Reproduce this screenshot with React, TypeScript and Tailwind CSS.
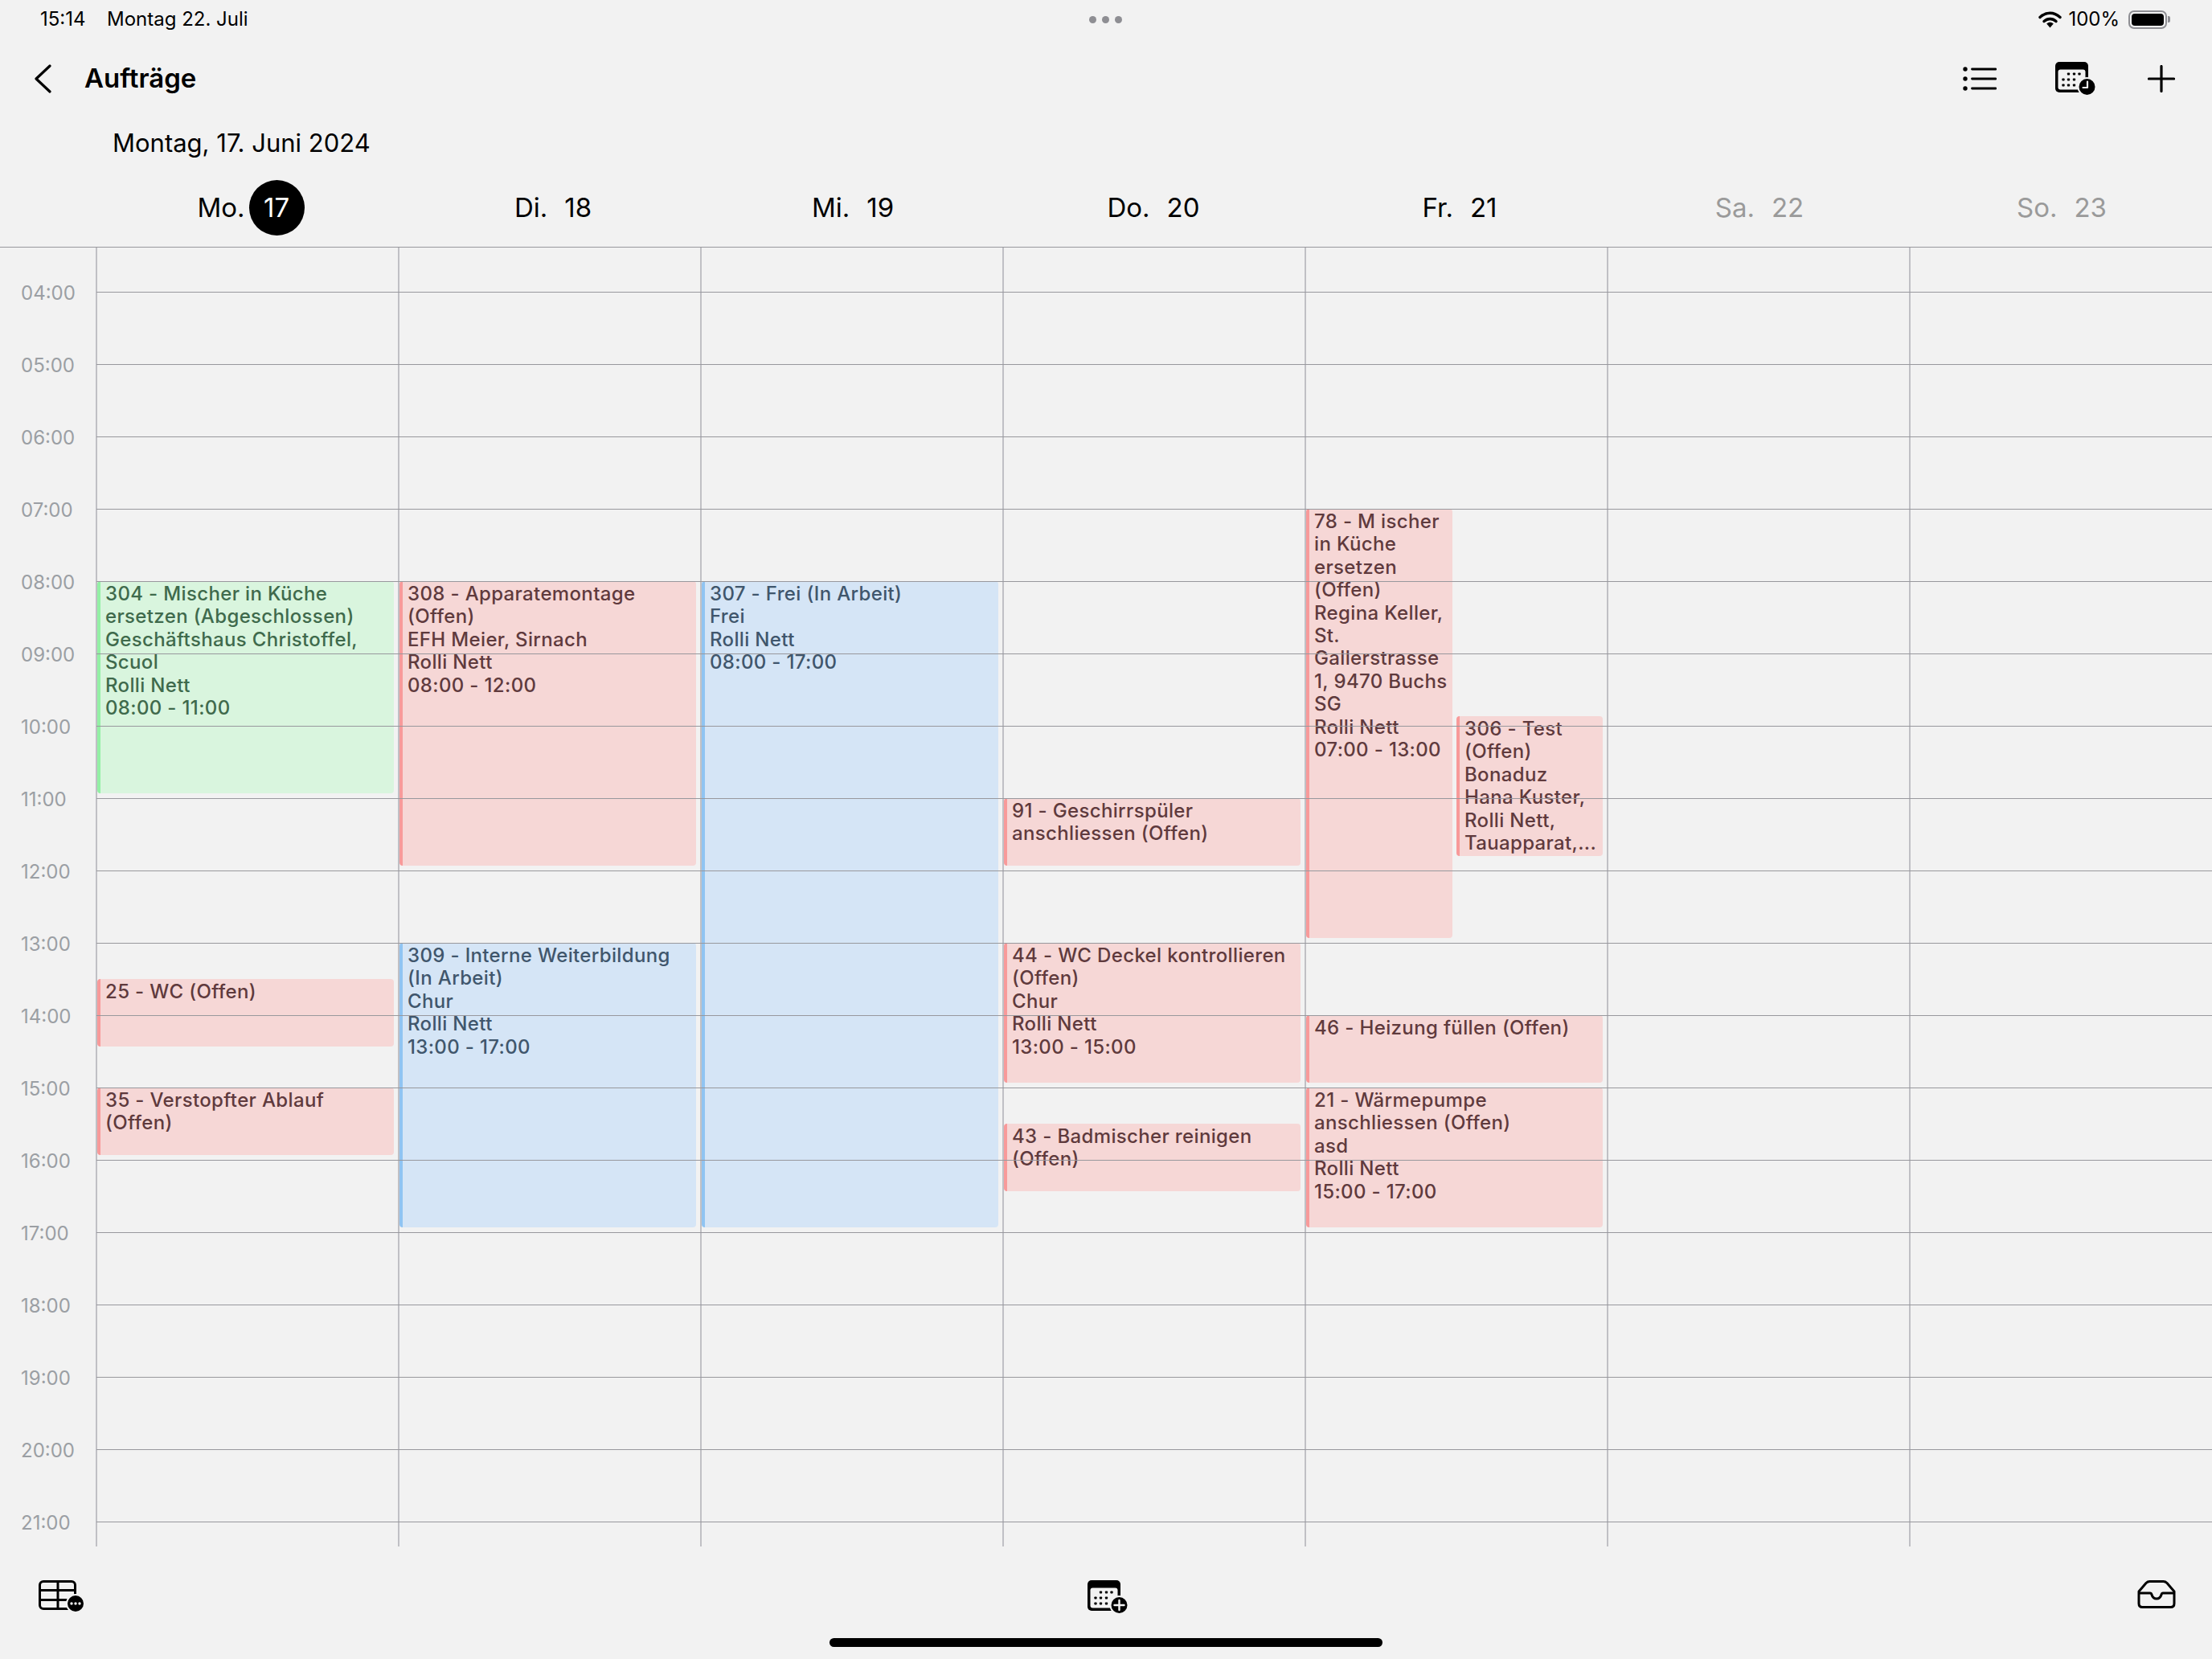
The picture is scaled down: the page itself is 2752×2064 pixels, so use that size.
type Tone = "green" | "red" | "blue";

type CalEvent = {
  tone: Tone;
  start: number;
  end: number;
  lines: string[];
  half?: "left" | "right";
};

const HOUR = 90;
const FIRST_HOUR = 4;
const TOP_PAD = 55;

const toneClass: Record<Tone, string> = {
  green: "bg-[#d9f5de] border-[#93f0a5] text-[#3f6a4c]",
  red: "bg-[#f6d7d6] border-[#f89a9a] text-[#5f3a3d]",
  blue: "bg-[#d5e5f6] border-[#90c4f2] text-[#40566c]",
};

const days = [
  { label: "Mo.", num: "17", today: true, shift: "pl-[8px]" },
  { label: "Di.", num: "18", shift: "pl-[8px]" },
  { label: "Mi.", num: "19", shift: "pl-[2px]" },
  { label: "Do.", num: "20", shift: "pr-[2px]" },
  { label: "Fr.", num: "21", shift: "pl-[8px]" },
  { label: "Sa.", num: "22", muted: true, shift: "pl-[2px]" },
  { label: "So.", num: "23", muted: true, shift: "pl-[2px]" },
];

const events: CalEvent[][] = [
  [
    {
      tone: "green",
      start: 8,
      end: 11,
      lines: ["304 - Mischer in Küche ersetzen (Abgeschlossen)", "Geschäftshaus Christoffel, Scuol", "Rolli Nett", "08:00 - 11:00"],
    },
    { tone: "red", start: 13.5, end: 14.5, lines: ["25 - WC (Offen)"] },
    { tone: "red", start: 15, end: 16, lines: ["35 - Verstopfter Ablauf (Offen)"] },
  ],
  [
    {
      tone: "red",
      start: 8,
      end: 12,
      lines: ["308 - Apparatemontage (Offen)", "EFH Meier, Sirnach", "Rolli Nett", "08:00 - 12:00"],
    },
    {
      tone: "blue",
      start: 13,
      end: 17,
      lines: ["309 - Interne Weiterbildung (In Arbeit)", "Chur", "Rolli Nett", "13:00 - 17:00"],
    },
  ],
  [
    {
      tone: "blue",
      start: 8,
      end: 17,
      lines: ["307 - Frei (In Arbeit)", "Frei", "Rolli Nett", "08:00 - 17:00"],
    },
  ],
  [
    { tone: "red", start: 11, end: 12, lines: ["91 - Geschirrspüler anschliessen (Offen)"] },
    {
      tone: "red",
      start: 13,
      end: 15,
      lines: ["44 - WC Deckel kontrollieren (Offen)", "Chur", "Rolli Nett", "13:00 - 15:00"],
    },
    { tone: "red", start: 15.5, end: 16.5, lines: ["43 - Badmischer reinigen (Offen)"] },
  ],
  [
    {
      tone: "red",
      start: 7,
      end: 13,
      half: "left",
      lines: ["78 - M ischer in Küche ersetzen (Offen)", "Regina Keller, St. Gallerstrasse 1, 9470 Buchs SG", "Rolli Nett", "07:00 - 13:00"],
    },
    {
      tone: "red",
      start: 9.867,
      end: 11.867,
      half: "right",
      lines: ["306 - Test (Offen)", "Bonaduz", "Hana Kuster, Rolli Nett, Tauapparat,..."],
    },
    { tone: "red", start: 14, end: 15, lines: ["46 - Heizung füllen (Offen)"] },
    {
      tone: "red",
      start: 15,
      end: 17,
      lines: ["21 - Wärmepumpe anschliessen (Offen)", "asd", "Rolli Nett", "15:00 - 17:00"],
    },
  ],
  [],
  [],
];

const hours = Array.from({ length: 18 }, (_, i) => `${String(i + FIRST_HOUR).padStart(2, "0")}:00`);

function EventCard({ event }: { event: CalEvent }) {
  const top = (event.start - FIRST_HOUR) * HOUR + TOP_PAD;
  const height = (event.end - event.start) * HOUR - 6;
  const placement =
    event.half === "left"
      ? "left-0 w-[182px]"
      : event.half === "right"
        ? "left-[187px] w-[182px]"
        : "left-0 w-[369px]";

  return (
    <div
      className={`absolute overflow-hidden rounded-[4px] border-l-[4px] pl-[6px] pr-[2px] pt-[2px] text-[24px] font-medium leading-[28.4px] tracking-[0.35px] ${placement} ${toneClass[event.tone]}`}
      style={{ top, height }}
    >
      {event.lines.map((line) => (
        <div key={line}>{line}</div>
      ))}
    </div>
  );
}

function CalendarGlyph({ badge }: { badge: "clock" | "plus" }) {
  const dots = [
    [16.5, 15],
    [23.5, 15],
    [30, 15],
    [10, 22],
    [16.5, 22],
    [23.5, 22],
    [10, 29],
    [16.5, 29],
    [23.5, 29],
  ];
  return (
    <svg width="51" height="42" viewBox="0 0 51 42">
      <rect x="0" y="0" width="41" height="38" rx="5" fill="#000" />
      <rect x="3.5" y="9.5" width="34" height="25" rx="3" fill="#f2f2f2" />
      {dots.map(([cx, cy]) => (
        <rect key={`${cx}-${cy}`} x={cx - 1.6} y={cy - 1.6} width="3.2" height="3.2" rx="0.8" fill="#000" />
      ))}
      <circle cx="39.5" cy="31" r="12" fill="#f2f2f2" />
      <circle cx="39.5" cy="31" r="10" fill="#000" />
      {badge === "clock" ? (
        <path d="M40 24.5V32H34.5" fill="none" stroke="#f2f2f2" strokeWidth="2.2" strokeLinecap="round" strokeLinejoin="round" />
      ) : (
        <path d="M39.5 25V37M33.5 31H45.5" fill="none" stroke="#f2f2f2" strokeWidth="2.4" strokeLinecap="round" />
      )}
    </svg>
  );
}

function StatusBar() {
  return (
    <div className="relative flex h-[48px] items-center pl-[50px] pr-[52px] text-[24px] text-black">
      <span className="w-[83px]">15:14</span>
      <span>Montag 22. Juli</span>
      <span className="absolute left-[1355px] top-[20px] flex gap-[7px]">
        <span className="size-[9px] rounded-full bg-[#8e8e93]" />
        <span className="size-[9px] rounded-full bg-[#8e8e93]" />
        <span className="size-[9px] rounded-full bg-[#8e8e93]" />
      </span>
      <svg width="29" height="21" viewBox="0 0 29 21" className="ml-auto mr-[8px]">
        <path d="M2 7.5C9.5 0.5 19.5 0.5 27 7.5" fill="none" stroke="#000" strokeWidth="3.4" strokeLinecap="round" />
        <path d="M7 12.5C11.5 8.5 17.5 8.5 22 12.5" fill="none" stroke="#000" strokeWidth="3.4" strokeLinecap="round" />
        <path d="M10.2 15.6C13 13.2 16 13.2 18.8 15.6L14.5 20.5Z" fill="#000" />
      </svg>
      <span className="mr-[11px]">100%</span>
      <div className="flex items-center">
        <div className="flex h-[23px] w-[48px] items-center rounded-[7px] border-2 border-[#8e8e93] p-[2px]">
          <div className="h-full w-full rounded-[4px] bg-black" />
        </div>
        <div className="ml-[1px] h-[8px] w-[3px] rounded-r-[2px] bg-[#8e8e93]" />
      </div>
    </div>
  );
}

function NavBar() {
  return (
    <div className="flex h-[100px] items-center pl-[42px] pr-[46px]">
      <svg width="22" height="36" viewBox="0 0 22 36">
        <path d="M20 2L3 18L20 34" fill="none" stroke="#000" strokeWidth="3.2" strokeLinecap="round" strokeLinejoin="round" />
      </svg>
      <h1 className="ml-[41px] flex-1 text-[33px] font-semibold text-black">Aufträge</h1>
      <svg width="42" height="30" viewBox="0 0 42 30" className="mr-[73px]">
        <circle cx="3" cy="3" r="2.7" fill="#000" />
        <circle cx="3" cy="15" r="2.7" fill="#000" />
        <circle cx="3" cy="27" r="2.7" fill="#000" />
        <path d="M11.5 3H41M11.5 15H41M11.5 27H41" stroke="#000" strokeWidth="2.8" strokeLinecap="round" />
      </svg>
      <CalendarGlyph badge="clock" />
      <svg width="34" height="34" viewBox="0 0 34 34" className="ml-[64px]">
        <path d="M17 1.5V32.5M1.5 17H32.5" stroke="#000" strokeWidth="3.2" strokeLinecap="round" />
      </svg>
    </div>
  );
}

function DayHeader() {
  return (
    <div className="grid h-[99px] grid-cols-[repeat(7,376px)] pl-[120px] pt-[2px] text-[33px] text-black">
      {days.map((day) => (
        <div
          key={day.label}
          className={`flex items-center justify-center ${day.shift} ${day.muted ? "text-[#9a9a9a]" : ""}`}
        >
          <span>{day.label}</span>
          {day.today ? (
            <span className="ml-[5px] flex size-[69px] items-center justify-center rounded-full bg-black text-white">
              {day.num}
            </span>
          ) : (
            <span className="ml-[21px]">{day.num}</span>
          )}
        </div>
      ))}
    </div>
  );
}

function Timeline() {
  return (
    <div className="flex h-[1616px]">
      <div className="w-[119px] pt-[57px] text-[24px] text-[#9b9fa4]">
        {hours.map((hour) => (
          <div key={hour} className="h-[90px] pl-[26px]">
            <span className="block -translate-y-1/2 leading-[30px]">{hour}</span>
          </div>
        ))}
      </div>
      <div className="relative flex-1">
        <div className="grid h-full grid-cols-[repeat(7,376px)]">
          {events.map((column, i) => (
            <div key={days[i].label} className="relative border-l-2 border-[#c0c0c5]">
              {column.map((event) => (
                <EventCard key={event.lines[0]} event={event} />
              ))}
            </div>
          ))}
        </div>
        <div className="pointer-events-none absolute inset-0 pl-px pt-[55px]">
          {hours.map((hour) => (
            <div key={hour} className="h-[90px] border-t border-[#98989d]" />
          ))}
        </div>
      </div>
    </div>
  );
}

function BottomBar() {
  return (
    <div className="relative flex h-[140px] items-start pl-[48px] pr-[45px] pt-[42px]">
      <svg width="57" height="41" viewBox="0 0 57 41">
        <rect x="1.5" y="1.5" width="44" height="34" rx="4.5" fill="none" stroke="#000" strokeWidth="3" />
        <path d="M2 12.5H45M2 24.5H45M24 2V35" stroke="#000" strokeWidth="3" />
        <circle cx="46" cy="29" r="12" fill="#f2f2f2" />
        <circle cx="46" cy="29" r="10" fill="#000" />
        <circle cx="41" cy="29" r="1.7" fill="#f2f2f2" />
        <circle cx="46" cy="29" r="1.7" fill="#f2f2f2" />
        <circle cx="51" cy="29" r="1.7" fill="#f2f2f2" />
      </svg>
      <div className="ml-[1248px]">
        <CalendarGlyph badge="plus" />
      </div>
      <svg width="48" height="36" viewBox="0 0 48 36" className="ml-auto">
        <path
          d="M2 14L11 3.5Q13 1.5 15.5 1.5H32.5Q35 1.5 37 3.5L46 14V29Q46 33.5 41.5 33.5H6.5Q2 33.5 2 29Z"
          fill="none"
          stroke="#000"
          strokeWidth="3"
          strokeLinejoin="round"
        />
        <path d="M2 16H16Q17.5 16 18 18Q19.5 23 24 23Q28.5 23 30 18Q30.5 16 32 16H46" fill="none" stroke="#000" strokeWidth="3" />
      </svg>
      <div className="absolute bottom-[15px] left-[1032px] h-[11px] w-[688px] rounded-full bg-black" />
    </div>
  );
}

export default function App() {
  return (
    <main className="h-[2064px] w-[2752px] overflow-hidden bg-[#f2f2f2] font-['Inter',sans-serif]">
      <StatusBar />
      <NavBar />
      <div className="flex h-[60px] items-center pl-[140px] text-[31px] text-black">Montag, 17. Juni 2024</div>
      <DayHeader />
      <div className="border-t border-[#98989d]" />
      <Timeline />
      <BottomBar />
    </main>
  );
}
